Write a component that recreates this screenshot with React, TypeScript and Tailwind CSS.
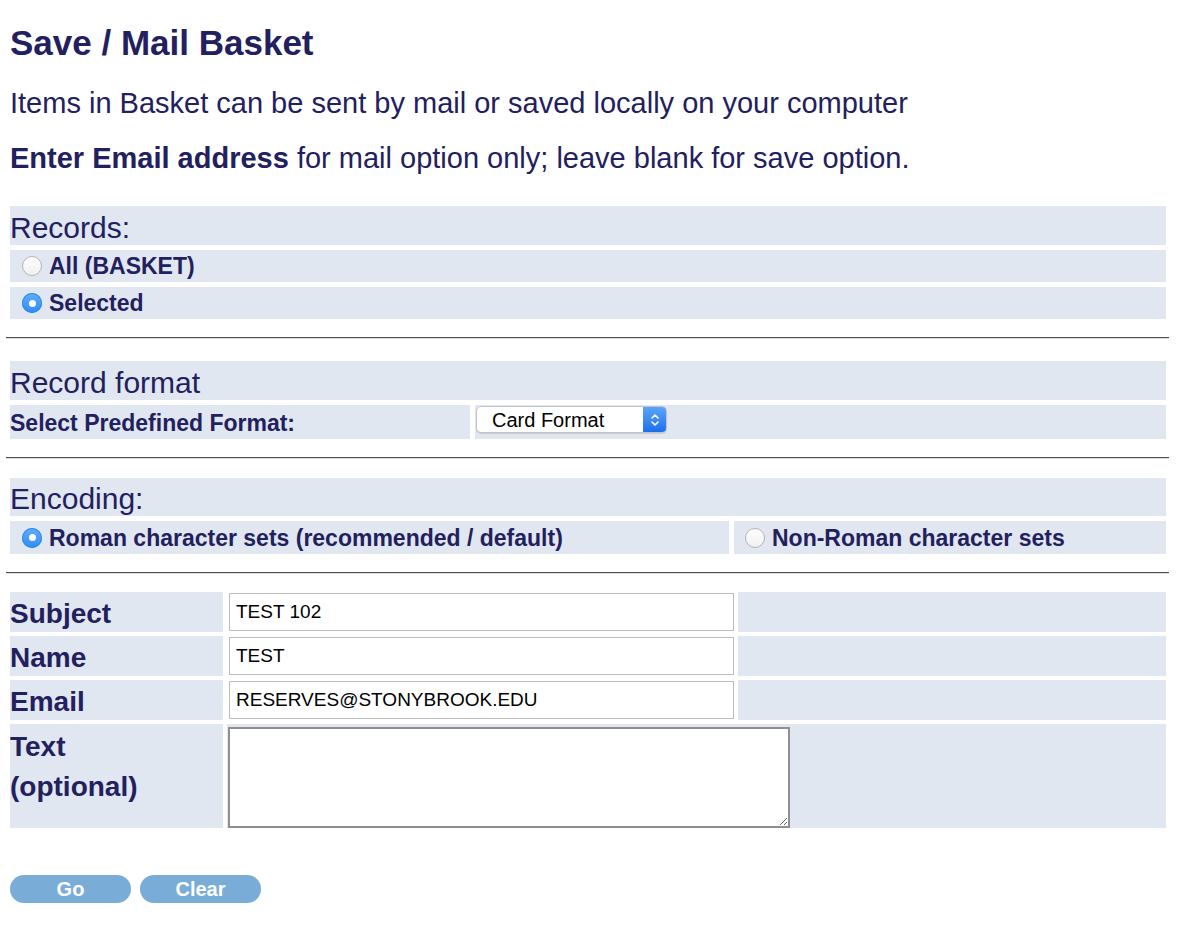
import React from 'react';

const Radio = ({ checked }: { checked?: boolean }) =>
  checked ? (
    <span className="flex h-[20px] w-[20px] shrink-0 items-center justify-center rounded-full bg-linear-to-b from-[#62aefb] to-[#2b8cf7] shadow-[inset_0_0_0_1px_#3188ea]">
      <span className="h-[7px] w-[7px] rounded-full bg-white" />
    </span>
  ) : (
    <span className="h-[20px] w-[20px] shrink-0 rounded-full border border-[#b4b4b4] bg-linear-to-b from-white to-[#f0f0f0]" />
  );

// horizontal rule between the form tables
const Rule = ({ className }: { className: string }) => (
  <div className={`-ml-[4px] w-[1163px] border-t border-b border-t-[#4f4f4f] border-b-[#dcdcdc] ${className}`} />
);

const fields = [
  { label: 'Subject', value: 'TEST 102' },
  { label: 'Name', value: 'TEST' },
  { label: 'Email', value: 'RESERVES@STONYBROOK.EDU' },
];

const App: React.FC = () => {
  return (
    <div className="min-h-[940px] bg-white pl-[10px] font-['Liberation_Sans',Arial,sans-serif] text-[#22205e]">
      <h1 className="pt-[23px] text-[35px] font-bold leading-[40px]">Save / Mail Basket</h1>
      <p className="mt-[23px] text-[29px] leading-[34px]">
        Items in Basket can be sent by mail or saved locally on your computer
      </p>
      <p className="mt-[21px] text-[29px] leading-[34px]">
        <b>Enter Email address</b> for mail option only; leave blank for save option.
      </p>

      {/* Records */}
      <div className="mt-[31px] flex w-[1156px] flex-col gap-[5px]">
        <div className="h-[39px] bg-[#e1e7f0] pt-[5px] text-[30px] leading-[34px]">Records:</div>
        <div className="flex h-[32px] items-center gap-[7px] bg-[#e1e7f0] pl-[12px] text-[23px] font-bold">
          <Radio />
          <span className="pt-[1px]">All (BASKET)</span>
        </div>
        <div className="flex h-[32px] items-center gap-[7px] bg-[#e1e7f0] pl-[12px] text-[23px] font-bold">
          <Radio checked />
          <span className="pt-[1px]">Selected</span>
        </div>
      </div>

      <Rule className="mt-[18px]" />

      {/* Record format */}
      <div className="mt-[22px] flex w-[1156px] flex-col gap-[5px]">
        <div className="h-[39px] bg-[#e1e7f0] pt-[5px] text-[30px] leading-[34px]">Record format</div>
        <div className="flex h-[34px] gap-[5px]">
          <div className="flex w-[460px] items-center bg-[#e1e7f0] pt-[3px] text-[23px] font-bold">
            Select Predefined Format:
          </div>
          <div className="flex flex-1 items-start bg-[#e1e7f0] pl-[1px] pt-[1px]">
            <div className="flex h-[27px] w-[191px] overflow-hidden rounded-[5px] border border-[#c4c4c4] bg-white shadow-[0_1px_1px_rgba(0,0,0,0.12)]">
              <span className="flex-1 pl-[15px] pt-[1px] text-[20px] leading-[25px] text-black">Card Format</span>
              <span className="flex w-[23px] items-center justify-center bg-linear-to-b from-[#5aa4fa] to-[#1b6fea]">
                <svg width="10" height="16" viewBox="0 0 10 16" fill="none" stroke="white" strokeWidth="1.6" strokeLinecap="round" strokeLinejoin="round">
                  <path d="M2 6 L5 3 L8 6" />
                  <path d="M2 10 L5 13 L8 10" />
                </svg>
              </span>
            </div>
          </div>
        </div>
      </div>

      <Rule className="mt-[18px]" />

      {/* Encoding */}
      <div className="mt-[19px] flex w-[1156px] flex-col gap-[5px]">
        <div className="h-[38px] bg-[#e1e7f0] pt-[4px] text-[30px] leading-[34px]">Encoding:</div>
        <div className="flex h-[33px] gap-[5px] text-[23px] font-bold">
          <div className="flex w-[719px] items-center gap-[7px] bg-[#e1e7f0] pl-[12px]">
            <Radio checked />
            <span className="pt-[1px]">Roman character sets (recommended / default)</span>
          </div>
          <div className="flex flex-1 items-center gap-[7px] bg-[#e1e7f0] pl-[11px]">
            <Radio />
            <span className="pt-[1px]">Non-Roman character sets</span>
          </div>
        </div>
      </div>

      <Rule className="mt-[18px]" />

      {/* Mail fields */}
      <div className="mt-[18px] flex w-[1156px] flex-col gap-[4px]">
        {fields.map((f) => (
          <div key={f.label} className="flex h-[40px] gap-[4px]">
            <div className="flex w-[213px] items-center bg-[#e1e7f0] pt-[3px] text-[28px] font-bold">{f.label}</div>
            <div className="flex w-[507px] items-center pl-[2px]">
              <input
                readOnly
                value={f.value}
                className="h-[38px] w-[506px] border border-[#bdbdbd] bg-white px-[6px] text-[19px] text-black outline-none"
              />
            </div>
            <div className="flex-1 bg-[#e1e7f0]" />
          </div>
        ))}
        <div className="flex h-[104px] gap-[4px]">
          <div className="w-[213px] bg-[#e1e7f0] pt-[3px] text-[28px] font-bold leading-[40px]">
            Text
            <br />
            (optional)
          </div>
          <div className="flex-1 bg-[#e1e7f0] pl-[1px] pt-[3px]">
            <textarea className="block h-[101px] w-[562px] border-2 border-[#8f8f8f] bg-white outline-none" />
          </div>
        </div>
      </div>

      <div className="mt-[47px] flex gap-[9px]">
        <button className="h-[28px] w-[121px] rounded-full bg-[#79add8] text-[20px] font-bold leading-[28px] text-white">
          Go
        </button>
        <button className="h-[28px] w-[121px] rounded-full bg-[#79add8] text-[20px] font-bold leading-[28px] text-white">
          Clear
        </button>
      </div>
    </div>
  );
};

export default App;
